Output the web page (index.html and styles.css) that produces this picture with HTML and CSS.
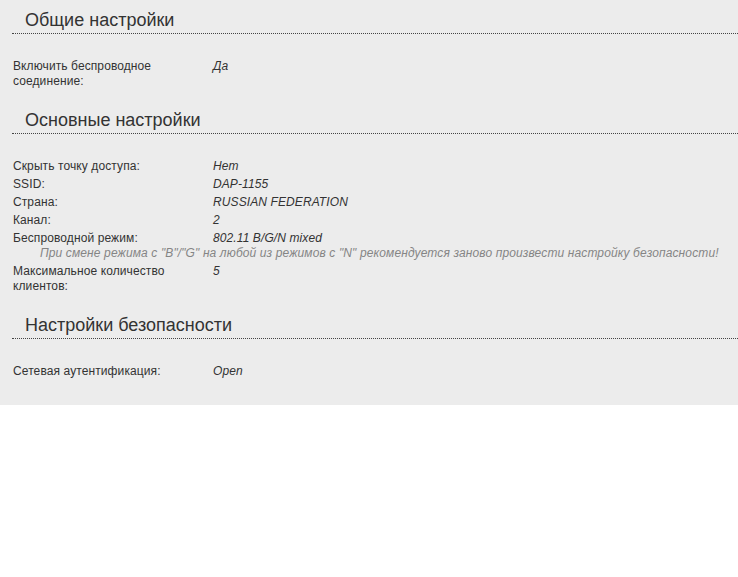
FILE: index.html
```html
<!DOCTYPE html>
<html lang="ru">
<head>
<meta charset="utf-8">
<title>Беспроводная сеть</title>
<link rel="stylesheet" href="styles.css">
</head>
<body>
<div class="panel">
  <section class="group">
    <h2 class="group-title">Общие настройки</h2>
    <div class="row">
      <div class="label">Включить беспроводное соединение:</div>
      <div class="value">Да</div>
    </div>
  </section>
  <section class="group">
    <h2 class="group-title">Основные настройки</h2>
    <div class="row">
      <div class="label">Скрыть точку доступа:</div>
      <div class="value">Нет</div>
    </div>
    <div class="row">
      <div class="label">SSID:</div>
      <div class="value">DAP-1155</div>
    </div>
    <div class="row">
      <div class="label">Страна:</div>
      <div class="value">RUSSIAN FEDERATION</div>
    </div>
    <div class="row">
      <div class="label">Канал:</div>
      <div class="value">2</div>
    </div>
    <div class="row row-wrap">
      <div class="label">Беспроводной режим:</div>
      <div class="value">802.11 B/G/N mixed</div>
      <div class="note">При смене режима с "B"/"G" на любой из режимов с "N" рекомендуется заново произвести настройку безопасности!</div>
    </div>
    <div class="row">
      <div class="label">Максимальное количество клиентов:</div>
      <div class="value">5</div>
    </div>
  </section>
  <section class="group">
    <h2 class="group-title">Настройки безопасности</h2>
    <div class="row">
      <div class="label">Сетевая аутентификация:</div>
      <div class="value">Open</div>
    </div>
  </section>
</div>
</body>
</html>
```

FILE: styles.css
```css
html, body {
  margin: 0;
  padding: 0;
  background: #ffffff;
}

body {
  font-family: "Liberation Sans", Arial, sans-serif;
  color: #333333;
}

.panel {
  background: #ececec;
  padding: 10px 0 25px 12px;
  display: flex;
  flex-direction: column;
  gap: 20px;
}

.group-title {
  margin: 0 0 23px 0;
  padding: 0 0 3px 13px;
  font-size: 18px;
  line-height: 20px;
  font-weight: normal;
  color: #333333;
  border-bottom: 1px dotted #444444;
}

.row {
  display: flex;
  flex-wrap: wrap;
  padding: 1.5px 0;
  font-size: 12px;
  line-height: 15px;
  letter-spacing: 0.1px;
}

.label {
  width: 180px;
  padding: 0 20px 0 1px;
  color: #333333;
}

.value {
  font-style: italic;
  color: #333333;
}

.note {
  flex-basis: 100%;
  padding-left: 28px;
  font-style: italic;
  color: #858585;
  letter-spacing: 0.12px;
}
```
